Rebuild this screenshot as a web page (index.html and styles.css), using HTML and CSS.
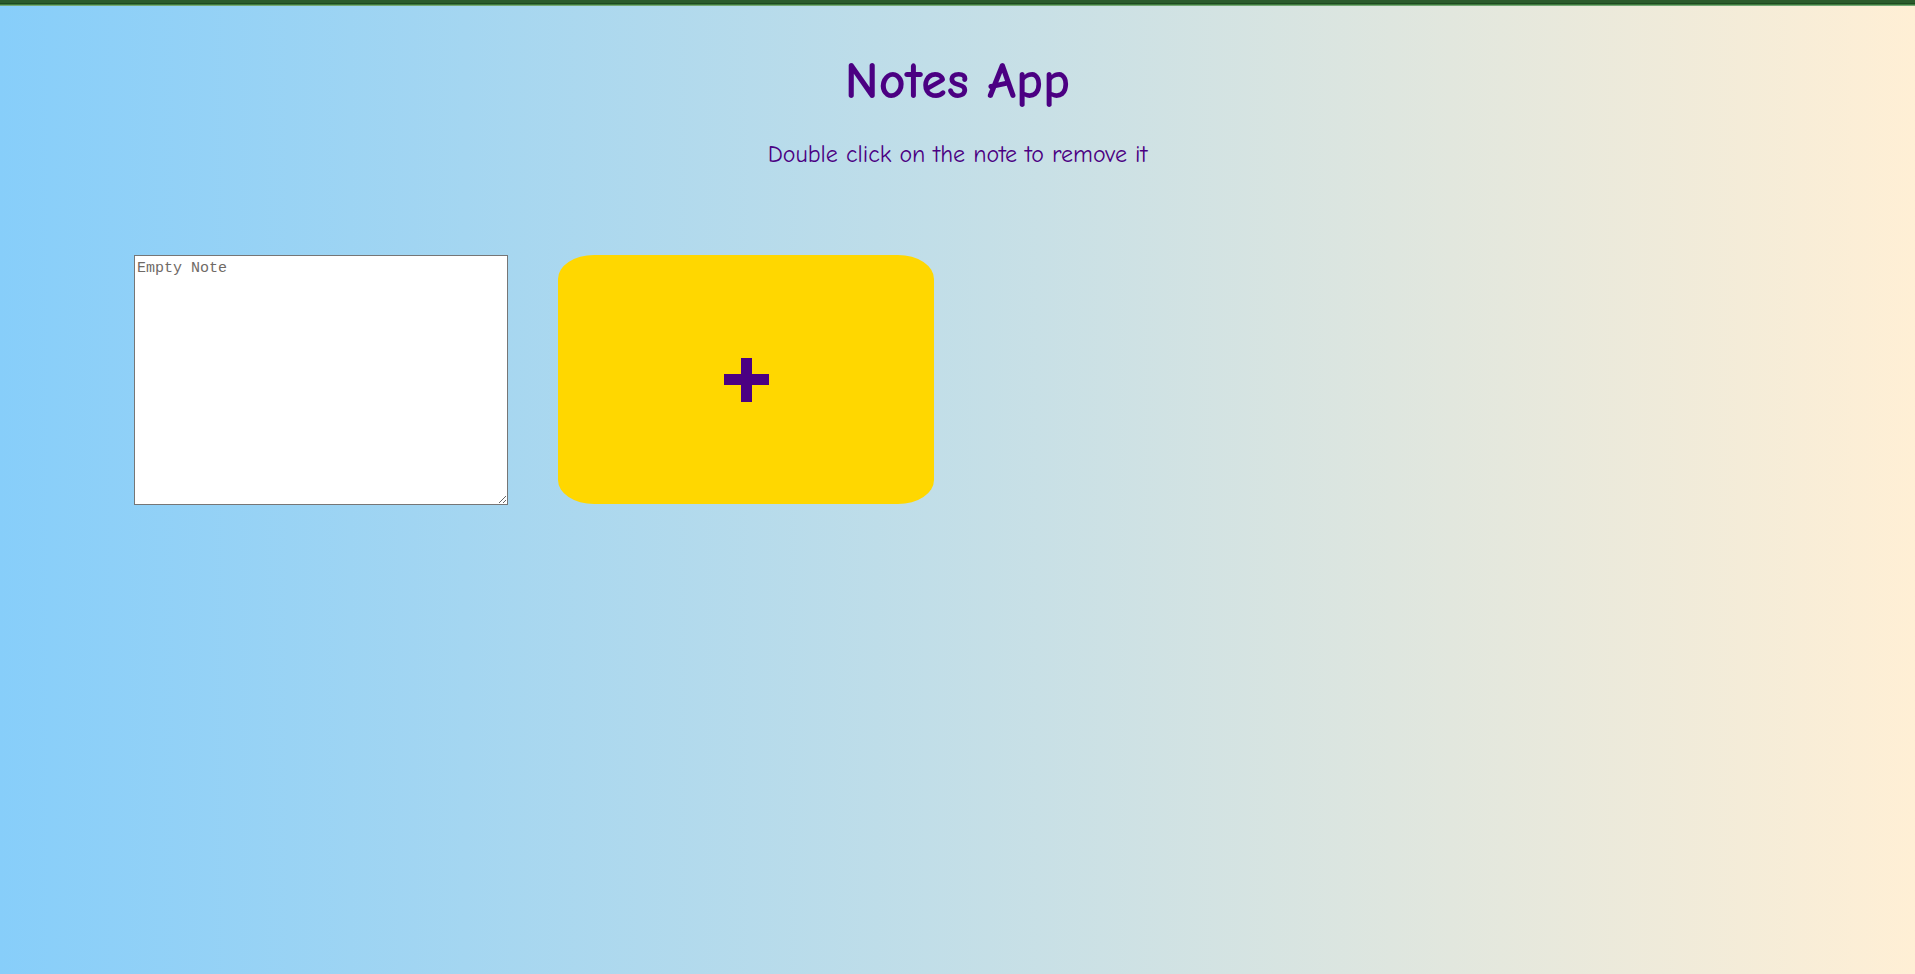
FILE: index.html
```html
<!DOCTYPE html>
<html lang="en">
<head>
<meta charset="utf-8">
<title>Notes App</title>
<link rel="stylesheet" href="styles.css">
</head>
<body>
  <div class="topbar"></div>
  <header class="header">
    <h1 class="title">Notes App</h1>
    <p class="subtitle">Double click on the note to remove it</p>
  </header>
  <main class="app">
    <textarea class="note" placeholder="Empty Note"></textarea>
    <button class="add-btn" type="button" aria-label="Add note">
      <svg width="45" height="44" viewBox="0 0 45 44" aria-hidden="true">
        <rect x="17" y="0" width="11" height="44" fill="#4b0082"/>
        <rect x="0" y="16" width="45" height="11" fill="#4b0082"/>
      </svg>
    </button>
  </main>
</body>
</html>
```

FILE: styles.css
```css
html, body {
  margin: 0;
  padding: 0;
  height: 100%;
}

body {
  background: linear-gradient(to right, #87cefa, #ffefd5);
  font-family: "Comic Sans MS", "Comic Neue", "Lato", sans-serif;
  color: #4b0082;
}

.topbar {
  height: 6px;
  background: linear-gradient(to bottom, #2b5b2c 0, #2b5b2c 3px, #1e4a21 3px, #1e4a21 4px, #3d7a3c 4px, #3d7a3c 5px, #77a877 5px, #77a877 6px);
}

.header {
  text-align: center;
}

.title {
  margin: 47px 0 0;
  font-size: 52px;
  line-height: 56px;
  font-weight: bold;
}

.subtitle {
  margin: 30px 0 0;
  font-size: 24px;
  line-height: 30px;
}

.app {
  display: flex;
  align-items: flex-start;
  gap: 50px;
  padding: 86px 0 0 134px;
}

.note {
  box-sizing: border-box;
  width: 374px;
  height: 250px;
  margin: 0;
  padding: 4px 2px;
  border: 1px solid #767676;
  background: #fff;
  font-family: "Liberation Mono", monospace;
  font-size: 15px;
  line-height: 18px;
  color: #333;
  resize: both;
}

.note::placeholder {
  color: #6f6a66;
}

.add-btn {
  display: flex;
  align-items: center;
  justify-content: center;
  width: 376px;
  height: 249px;
  margin: 0;
  padding: 0;
  border: none;
  border-radius: 36px / 24px;
  background: #ffd700;
  cursor: pointer;
}
```
